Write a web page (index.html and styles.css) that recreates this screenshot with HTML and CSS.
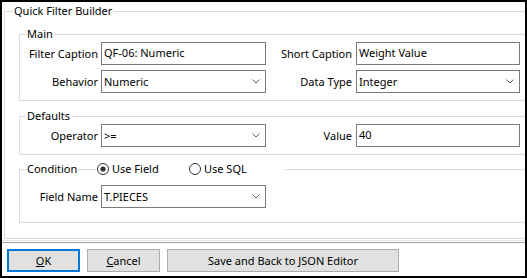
FILE: index.html
```html
<!DOCTYPE html>
<html lang="en">
<head>
    <meta charset="UTF-8">
    <title>Quick Filter Builder</title>
    <link rel="stylesheet" href="styles.css">
</head>
<body>
    <div class="window">
        <fieldset class="group outer">
            <legend>Quick Filter Builder</legend>

            <fieldset class="group section">
                <legend>Main</legend>
                <div class="form-grid">
                    <label>Filter Caption</label>
                    <div class="textbox">QF-06: Numeric</div>
                    <label>Short Caption</label>
                    <div class="textbox">Weight Value</div>

                    <label>Behavior</label>
                    <div class="combo">
                        <span>Numeric</span>
                        <svg class="chevron" width="8" height="5" viewBox="0 0 8 5"><polyline points="0.5,0.5 4,4 7.5,0.5"/></svg>
                    </div>
                    <label>Data Type</label>
                    <div class="combo">
                        <span>Integer</span>
                        <svg class="chevron" width="8" height="5" viewBox="0 0 8 5"><polyline points="0.5,0.5 4,4 7.5,0.5"/></svg>
                    </div>
                </div>
            </fieldset>

            <fieldset class="group section defaults">
                <legend>Defaults</legend>
                <div class="form-grid">
                    <label>Operator</label>
                    <div class="combo">
                        <span>&gt;=</span>
                        <svg class="chevron" width="8" height="5" viewBox="0 0 8 5"><polyline points="0.5,0.5 4,4 7.5,0.5"/></svg>
                    </div>
                    <label>Value</label>
                    <div class="textbox">40</div>
                </div>
            </fieldset>

            <fieldset class="group section condition">
                <legend>
                    <div class="cond-legend">
                        <span class="cond-head">
                            <span class="cond-title">Condition</span>
                            <span class="legend-rule"></span>
                        </span>
                        <span class="radio radio-field">
                            <svg width="12" height="12" viewBox="0 0 12 12"><circle class="ring" cx="6" cy="6" r="5.5"/><circle class="dot" cx="6" cy="6" r="2.6"/></svg>
                            Use Field
                        </span>
                        <span class="radio radio-sql">
                            <svg width="12" height="12" viewBox="0 0 12 12"><circle class="ring" cx="6" cy="6" r="5.5"/></svg>
                            Use SQL
                        </span>
                    </div>
                </legend>
                <div class="form-grid">
                    <label>Field Name</label>
                    <div class="combo">
                        <span>T.PIECES</span>
                        <svg class="chevron" width="8" height="5" viewBox="0 0 8 5"><polyline points="0.5,0.5 4,4 7.5,0.5"/></svg>
                    </div>
                </div>
            </fieldset>
        </fieldset>

        <div class="separator"></div>

        <div class="buttons">
            <button class="btn btn-default"><u>O</u>K</button>
            <button class="btn"><u>C</u>ancel</button>
            <button class="btn btn-wide">Save and Back to JSON Editor</button>
        </div>
    </div>
</body>
</html>
```

FILE: styles.css
```css
* {
    box-sizing: border-box;
}

body {
    margin: 0;
    background-color: #fff;
    font-family: 'Noto Sans', 'Open Sans', sans-serif;
    font-size: 11px;
    color: #000;
}

.window {
    width: 527px;
    height: 278px;
    border: 2px solid #000;
    background-color: #fff;
    overflow: hidden;
    display: flex;
    flex-direction: column;
}

/* Group boxes */
.group {
    border: 1px solid #dcdcdc;
    margin: 0;
    padding: 0;
    min-width: 0;
}

.group > legend {
    padding: 0 1px;
    height: 16px;
    line-height: 16px;
}

.outer {
    margin: 1px -20px 0 2px;
    padding: 0 0 15px 0;
}
.outer > legend {
    margin-left: 8px;
}

.section {
    margin: 7px 0 0 14px;
    padding: 0 0 7px 0;
}
.section > legend {
    margin-left: 6px;
}

.condition {
    margin-top: 6px;
    padding-bottom: 14px;
}
.condition .form-grid {
    padding-top: 8px;
}

/* Rows of labels and inputs */
.form-grid {
    display: grid;
    grid-template-columns: 81px 165px 90px 164px;
    grid-auto-rows: 23px;
    row-gap: 5px;
    align-items: center;
}

.form-grid label {
    text-align: right;
    padding-right: 3px;
    white-space: nowrap;
}
.form-grid label:nth-child(4n+3) {
    padding-right: 4px;
}

.textbox,
.combo {
    height: 23px;
    border: 1px solid #7a7a7a;
    background-color: #fff;
    padding: 0 2px;
    line-height: 20px;
    white-space: nowrap;
}

.combo {
    display: flex;
    align-items: center;
    justify-content: space-between;
    padding-right: 5px;
}

.chevron polyline {
    fill: none;
    stroke: #606060;
    stroke-width: 1;
}

/* Condition legend with radio buttons */
.cond-legend {
    display: flex;
    align-items: center;
    height: 16px;
    width: 257px;
    background-color: #fff;
}
.cond-head {
    display: flex;
    align-items: center;
    width: 69px;
}
.legend-rule {
    flex: 1;
    height: 1px;
    margin-left: 1px;
    background-color: #dcdcdc;
}
.radio {
    display: flex;
    align-items: center;
    gap: 3px;
    white-space: nowrap;
}
.radio-field {
    width: 93px;
    padding-left: 1px;
}
.radio-sql {
    width: 95px;
}
.radio .ring {
    fill: #fff;
    stroke: #333;
}
.radio .dot {
    fill: #333;
}

/* Bottom bar */
.separator {
    margin-top: 1px;
    height: 3px;
    border-top: 1px solid #e3e3e3;
    border-bottom: 1px solid #a0a0a0;
    margin-right: -4px;
}

.buttons {
    display: flex;
    gap: 7px;
    padding-left: 5px;
    margin-top: 6px;
}

.btn {
    width: 73px;
    height: 23px;
    background-color: #e1e1e1;
    border: 1px solid #adadad;
    font-family: inherit;
    font-size: 11px;
    color: #000;
    padding: 0;
}
.btn-default {
    border: 2px solid #0078d7;
}
.btn-wide {
    width: 232px;
}
```
